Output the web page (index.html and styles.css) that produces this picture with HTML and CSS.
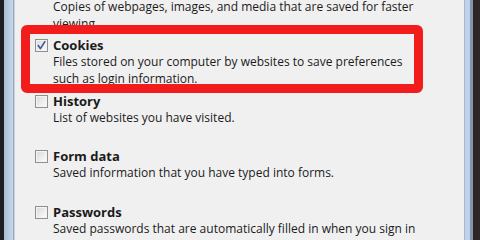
FILE: index.html
```html
<!DOCTYPE html>
<html>
<head>
<meta charset="utf-8">
<link rel="stylesheet" href="styles.css">
</head>
<body>
<div class="window">
  <div class="frame-left"><div class="fl-dark"></div><div class="fl-glass"></div><div class="fl-line"></div></div>
  <div class="content">
    <div class="list">
      <div class="item">
        <div class="title"><span class="box"></span><span class="label">Temporary Internet files</span></div>
        <div class="desc">Copies of webpages, images, and media that are saved for faster<br>viewing.</div>
      </div>
      <div class="item">
        <div class="title"><span class="box"><svg class="check" viewBox="0 0 11 11" width="11" height="11"><path d="M2.2 5.6 L4.4 8.6 L8.9 1.6" fill="none" stroke="#3f5aa0" stroke-width="1.7" stroke-linejoin="round" stroke-linecap="round"/></svg></span><span class="label">Cookies</span></div>
        <div class="desc">Files stored on your computer by websites to save preferences<br>such as login information.</div>
      </div>
      <div class="item">
        <div class="title"><span class="box"></span><span class="label">History</span></div>
        <div class="desc">List of websites you have visited.</div>
      </div>
      <div class="item">
        <div class="title"><span class="box"></span><span class="label">Form data</span></div>
        <div class="desc">Saved information that you have typed into forms.</div>
      </div>
      <div class="item">
        <div class="title"><span class="box"></span><span class="label">Passwords</span></div>
        <div class="desc">Saved passwords that are automatically filled in when you sign in</div>
      </div>
    </div>
    <div class="highlight"></div>
  </div>
  <div class="frame-right"><div class="fr-line"></div><div class="fr-glass"></div><div class="fr-mid"></div><div class="fr-dark"></div></div>
</div>
</body>
</html>
```

FILE: styles.css
```css
html, body {
  margin: 0;
  padding: 0;
  width: 480px;
  height: 240px;
  overflow: hidden;
  background: #f0f0f0;
}
.window {
  display: flex;
  width: 480px;
  height: 240px;
}
.frame-left {
  display: flex;
  width: 15px;
  flex: none;
}
.fl-dark { width: 4px; background: #1e1e20; }
.fl-glass { width: 9px; background: linear-gradient(to right, #a9bed3, #c6d7ea); }
.fl-line { width: 2px; background: linear-gradient(to right, #8394a8, #dfe6ee); }
.frame-right {
  display: flex;
  width: 16px;
  flex: none;
}
.fr-line { width: 1px; background: #a7b8ca; }
.fr-glass { width: 5px; background: #bed3e9; }
.fr-mid { width: 3px; background: #8296ad; }
.fr-dark { width: 7px; background: #2e2727; }
.content {
  flex: 1;
  position: relative;
  overflow: hidden;
  font-family: "Open Sans", "Noto Sans", sans-serif;
  font-size: 12px;
  color: #1b1b1b;
}
.list {
  margin-top: -17.5px;
  padding-left: 20px;
}
.item {
  height: 55.5px;
}
.title {
  display: flex;
  align-items: center;
  height: 15px;
  line-height: 15px;
}
.box {
  width: 11px;
  height: 11px;
  border: 1px solid #8e8f8f;
  background: linear-gradient(135deg, #d8d8d8, #f6f6f6 80%);
  box-shadow: inset 0 0 0 1px #f4f4f4;
  margin-right: 5px;
  flex: none;
  position: relative;
}
.check {
  position: absolute;
  left: 0;
  top: 0;
}
.label {
  font-weight: bold;
  font-size: 13px;
}
.desc {
  margin-left: 18px;
  line-height: 17px;
}
.highlight {
  position: absolute;
  left: 6px;
  top: 25px;
  width: 384px;
  height: 50px;
  border: 9px solid #f21c1c;
  border-radius: 6px;
}
```
